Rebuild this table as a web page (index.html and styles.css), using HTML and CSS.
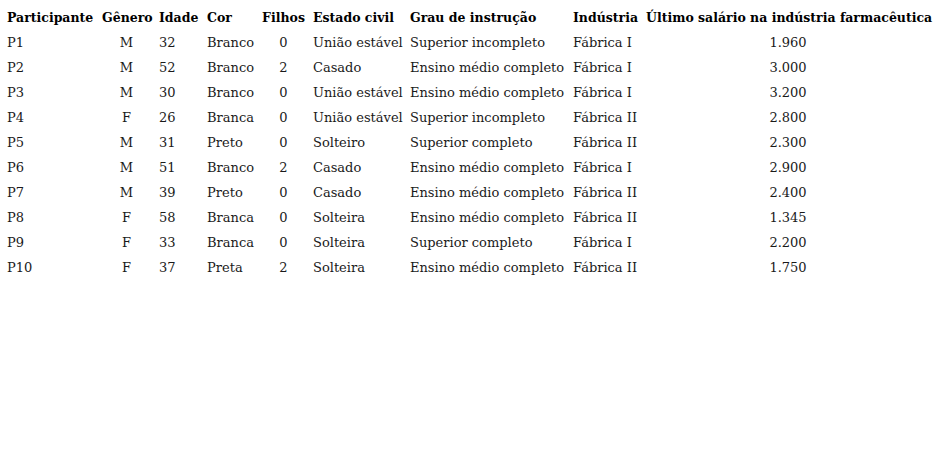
FILE: index.html
```html
<!DOCTYPE html>
<html lang="pt">
<head>
<meta charset="utf-8">
<link rel="stylesheet" href="styles.css">
</head>
<body>
<table class="data">
  <thead>
    <tr>
      <th class="l w1">Participante</th>
      <th class="w2">Gênero</th>
      <th class="l w3">Idade</th>
      <th class="l w4">Cor</th>
      <th class="w5">Filhos</th>
      <th class="l w6">Estado civil</th>
      <th class="l w7">Grau de instrução</th>
      <th class="l w8">Indústria</th>
      <th class="w9">Último salário na indústria farmacêutica</th>
    </tr>
  </thead>
  <tbody>
    <tr><td>P1</td><td class="c">M</td><td>32</td><td>Branco</td><td class="c">0</td><td>União estável</td><td>Superior incompleto</td><td>Fábrica I</td><td class="c">1.960</td></tr>
    <tr><td>P2</td><td class="c">M</td><td>52</td><td>Branco</td><td class="c">2</td><td>Casado</td><td>Ensino médio completo</td><td>Fábrica I</td><td class="c">3.000</td></tr>
    <tr><td>P3</td><td class="c">M</td><td>30</td><td>Branco</td><td class="c">0</td><td>União estável</td><td>Ensino médio completo</td><td>Fábrica I</td><td class="c">3.200</td></tr>
    <tr><td>P4</td><td class="c">F</td><td>26</td><td>Branca</td><td class="c">0</td><td>União estável</td><td>Superior incompleto</td><td>Fábrica II</td><td class="c">2.800</td></tr>
    <tr><td>P5</td><td class="c">M</td><td>31</td><td>Preto</td><td class="c">0</td><td>Solteiro</td><td>Superior completo</td><td>Fábrica II</td><td class="c">2.300</td></tr>
    <tr><td>P6</td><td class="c">M</td><td>51</td><td>Branco</td><td class="c">2</td><td>Casado</td><td>Ensino médio completo</td><td>Fábrica I</td><td class="c">2.900</td></tr>
    <tr><td>P7</td><td class="c">M</td><td>39</td><td>Preto</td><td class="c">0</td><td>Casado</td><td>Ensino médio completo</td><td>Fábrica II</td><td class="c">2.400</td></tr>
    <tr><td>P8</td><td class="c">F</td><td>58</td><td>Branca</td><td class="c">0</td><td>Solteira</td><td>Ensino médio completo</td><td>Fábrica II</td><td class="c">1.345</td></tr>
    <tr><td>P9</td><td class="c">F</td><td>33</td><td>Branca</td><td class="c">0</td><td>Solteira</td><td>Superior completo</td><td>Fábrica I</td><td class="c">2.200</td></tr>
    <tr><td>P10</td><td class="c">F</td><td>37</td><td>Preta</td><td class="c">2</td><td>Solteira</td><td>Ensino médio completo</td><td>Fábrica II</td><td class="c">1.750</td></tr>
  </tbody>
</table>
</body>
</html>
```
FILE: styles.css
```css
html, body {
  margin: 0;
  background: #fff;
}
body {
  padding: 5px 0 0 3px;
  font-family: "DejaVu Serif", "Liberation Serif", serif;
  color: #111;
}
.data {
  border-collapse: collapse;
  table-layout: fixed;
  width: 931px;
  font-size: 13px;
}
.data th {
  box-sizing: border-box;
  font-weight: bold;
  font-size: 12.5px;
  height: 25px;
  padding: 0 4px;
  text-align: center;
  white-space: nowrap;
  color: #000;
}
.data th.l {
  text-align: left;
}
.w1 { width: 95px; }
.w2 { width: 57px; }
.w3 { width: 48px; }
.w4 { width: 55px; }
.w5 { width: 51px; }
.w6 { width: 97px; }
.w7 { width: 163px; }
.w8 { width: 73px; }
.w9 { width: 292px; }
.data td {
  height: 25px;
  padding: 0 4px;
  text-align: left;
  white-space: nowrap;
  color: #1a1a1a;
}
.data td.c {
  text-align: center;
}
```
